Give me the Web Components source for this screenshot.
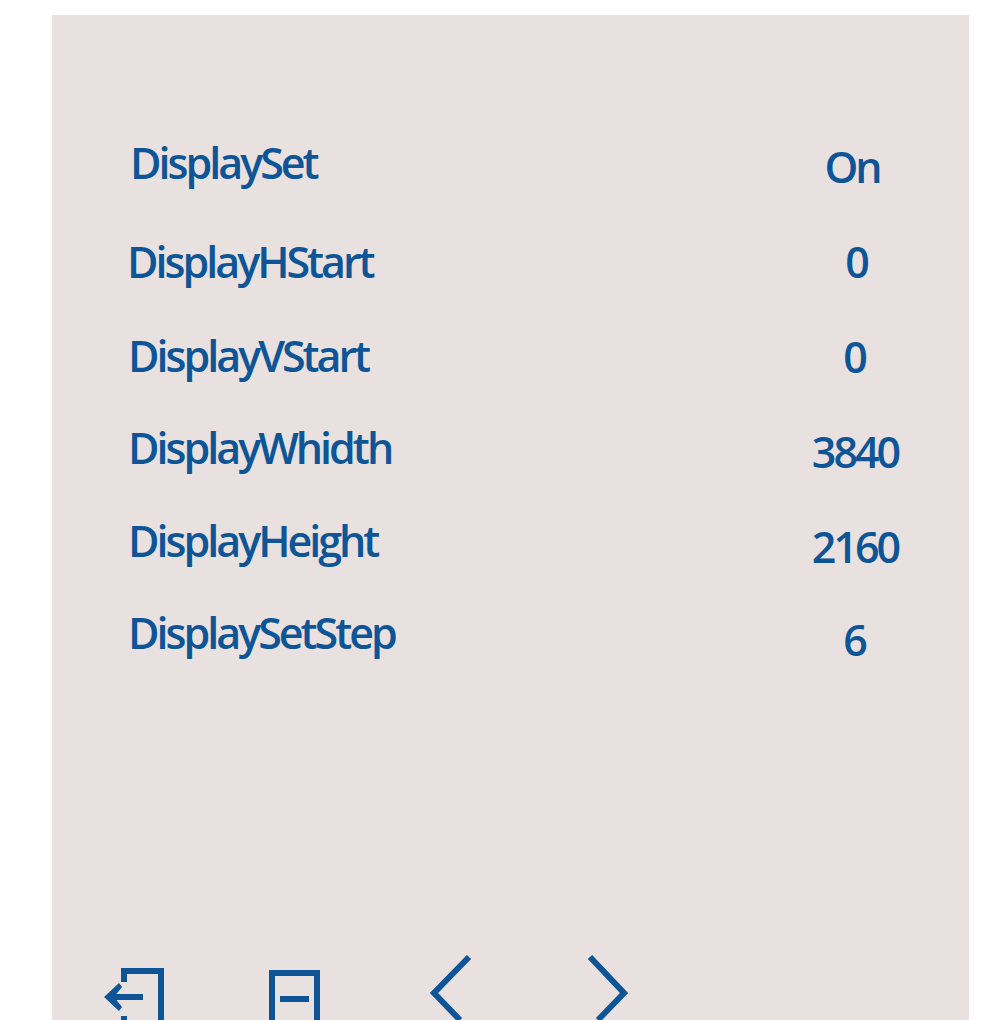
<!DOCTYPE html>
<html>
<head>
<meta charset="utf-8">
<style>
  html, body { margin: 0; height: 100%; background: #fff; overflow: hidden; }
</style>
</head>
<body>
<osd-panel>
  <osd-row name="DisplaySet" value="On" name-top="3" name-left="2" value-top="7" value-right="8"></osd-row>
  <osd-row name="DisplayHStart" value="0" name-top="8" name-left="-1" value-top="8"></osd-row>
  <osd-row name="DisplayVStart" value="0" name-top="8" value-top="9" value-right="4"></osd-row>
  <osd-row name="DisplayWhidth" value="3840" name-top="6" value-top="10" value-right="2"></osd-row>
  <osd-row name="DisplayHeight" value="2160" name-top="5" value-top="11" value-right="2"></osd-row>
  <osd-row name="DisplaySetStep" value="6" name-top="3" value-top="10" value-right="4"></osd-row>
  <osd-toolbar slot="toolbar"></osd-toolbar>
</osd-panel>
<script>
customElements.define('osd-panel', class OsdPanel extends HTMLElement {
  constructor() {
    super();
    this.attachShadow({mode: 'open'});
    this.shadowRoot.innerHTML = `<style>
      :host {
        display: block;
        box-sizing: border-box;
        width: 917px;
        height: 1005px;
        margin: 15px 0 0 52px;
        padding: 120px 68px 0 76px;
        background: #e9e1df;
        color: #0d5596;
        font-family: "Open Sans", "Liberation Sans", sans-serif;
        overflow: hidden;
      }
      .rows { display: flex; flex-direction: column; }
      .bar { margin-top: 251px; }
    </style>
    <div class="rows"><slot></slot></div>
    <div class="bar"><slot name="toolbar"></slot></div>`;
  }
});

customElements.define('osd-row', class OsdRow extends HTMLElement {
  constructor() {
    super();
    this.attachShadow({mode: 'open'});
    this.shadowRoot.innerHTML = `<style>
      :host {
        display: flex;
        justify-content: space-between;
        align-items: flex-start;
        height: 94px;
        font-size: 43px;
        line-height: 50px;
        font-weight: 600;
        letter-spacing: -3px;
      }
      .value { box-sizing: border-box; width: 90px; text-align: center; }
    </style>
    <span class="name"></span><span class="value"></span>`;
  }

  connectedCallback() {
    const name = this.shadowRoot.querySelector('.name');
    const value = this.shadowRoot.querySelector('.value');
    name.textContent = this.getAttribute('name');
    value.textContent = this.getAttribute('value');
    // the source photo is not quite square, so each text sits a little off the grid
    name.style.marginTop = (this.getAttribute('name-top') || 0) + 'px';
    name.style.marginLeft = (this.getAttribute('name-left') || 0) + 'px';
    value.style.marginTop = (this.getAttribute('value-top') || 0) + 'px';
    value.style.paddingRight = (this.getAttribute('value-right') || 0) + 'px';
  }
});

customElements.define('osd-toolbar', class OsdToolbar extends HTMLElement {
  constructor() {
    super();
    this.attachShadow({mode: 'open'});
    this.shadowRoot.innerHTML = `<style>
      :host { display: flex; margin-left: -28px; }
      svg { height: 70px; flex: none; fill: none; stroke: #0d5596; stroke-width: 6; }
      .exit { width: 68px; }
      .save { width: 61px; margin-left: 96px; }
      .prev { width: 50px; margin-left: 100px; }
      .next { width: 47px; margin-left: 110px; }
      .head { fill: #0d5596; stroke: none; }
    </style>
    <svg class="exit" viewBox="100 950 68 70"><path d="M124 982V971H161V1020M143 997H112M124 1016V1020"/><path class="head" d="M104 997 119 983 122 987 114 997 122 1007 119 1011z"/></svg>
    <svg class="save" viewBox="264 950 61 70"><path d="M272 1020V973H317V1020M280 999H309"/></svg>
    <svg class="prev" viewBox="425 950 50 70"><path d="M469 957 434 993 460 1020"/></svg>
    <svg class="next" viewBox="585 950 47 70"><path d="M590 957 624 993 598 1020"/></svg>`;
  }
});
</script>
</body>
</html>
